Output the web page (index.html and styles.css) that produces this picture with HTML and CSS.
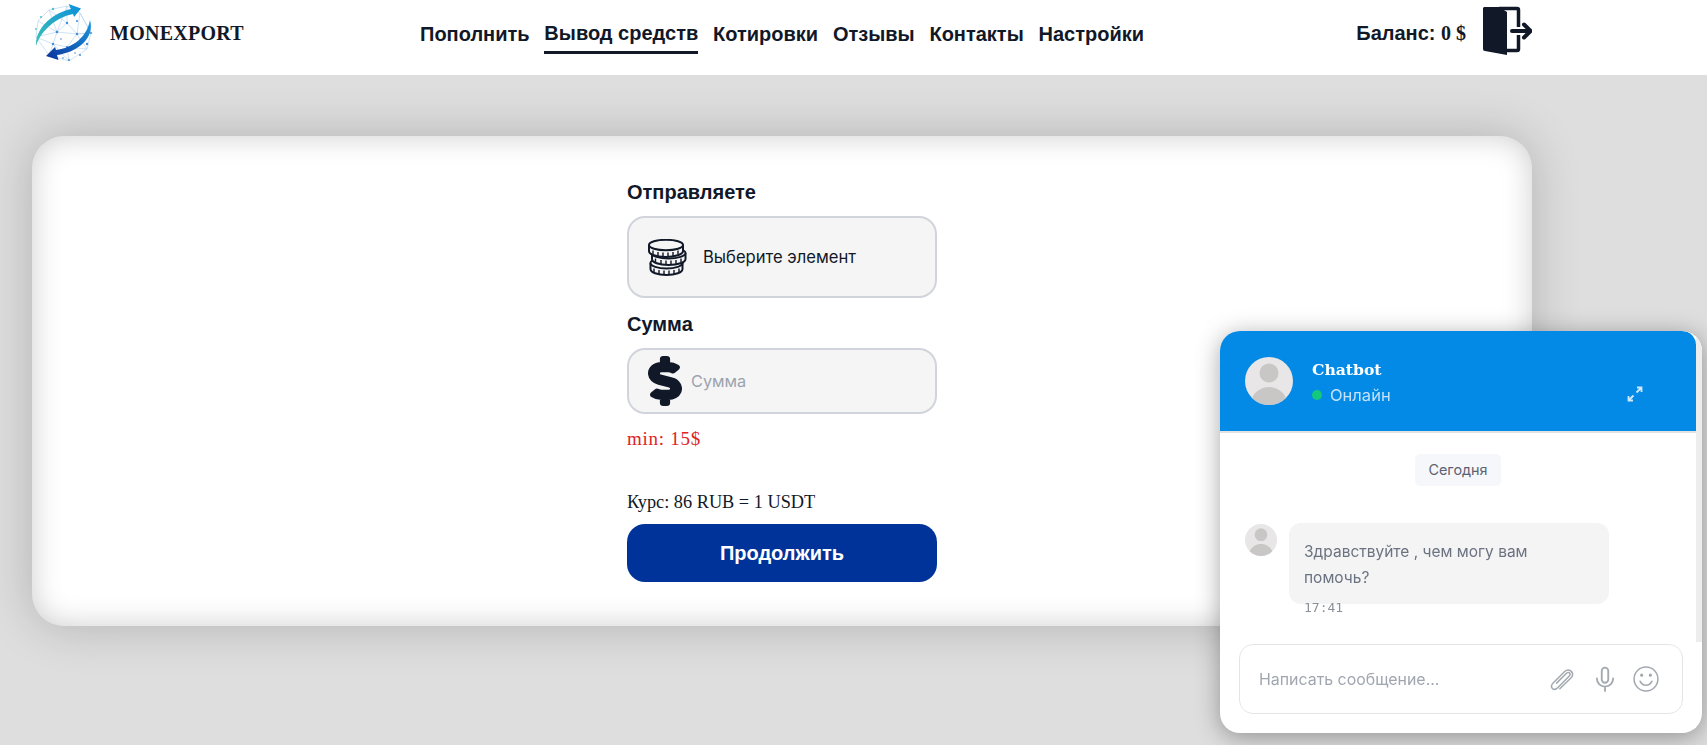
FILE: index.html
```html
<!DOCTYPE html>
<html lang="en">
<head>
  <meta charset="UTF-8" />
  <title>Monexport</title>
  <link rel="stylesheet" href="styles.css">
</head>
<body>
  <header class="topbar">
    <a class="brand">
      <svg class="brand-logo" viewBox="0 0 61 59">
        <defs>
          <linearGradient id="arrowTop" x1="0" y1="1" x2="1" y2="0">
            <stop offset="0" stop-color="#3cc0b4"/>
            <stop offset="1" stop-color="#0a8fdc"/>
          </linearGradient>
          <linearGradient id="arrowBottom" x1="1" y1="0" x2="0" y2="1">
            <stop offset="0" stop-color="#1a9ade"/>
            <stop offset="1" stop-color="#0b2f9c"/>
          </linearGradient>
        </defs>
        <g stroke="#aed0ec" stroke-width=".6" fill="none">
          <path d="M16 7 34 3 47 10 58 30 54 46 36 58 16 52 3 34 5 18Z"/>
          <path d="M16 7 24 29 20 41 36 58M34 3 24 29 44 31 54 46M47 10 44 31 34 44 20 41M3 34 24 29M34 44 36 58M44 31 58 30M34 3 34 20 44 31M16 7 34 20 24 29M5 18 24 29M3 34 20 41 16 52M34 44 54 46M47 10 58 30 44 31"/>
        </g>
        <g fill="#3e8ed6">
          <circle cx="24" cy="29" r="1.300"/><circle cx="44" cy="31" r="1.200"/><circle cx="34" cy="44" r="1.100"/>
          <circle cx="20" cy="41" r="1.200"/><circle cx="54" cy="41" r="1.200"/><circle cx="34" cy="20" r="1.200"/>
          <circle cx="47" cy="52" r="1"/><circle cx="36" cy="57" r="1"/><circle cx="58" cy="30" r="1"/>
          <circle cx="44" cy="18" r="1"/><circle cx="28" cy="36" r=".8"/><circle cx="50" cy="36" r=".8"/>
          <circle cx="42" cy="50" r=".8"/><circle cx="30" cy="55" r=".8"/><circle cx="16" cy="52" r=".8"/>
        </g>
        <g fill="#4cc0c8">
          <circle cx="20" cy="6" r="1.200"/><circle cx="8" cy="14" r="1"/><circle cx="3" cy="26" r=".9"/>
          <circle cx="30" cy="10" r=".9"/><circle cx="14" cy="24" r=".8"/>
        </g>
        <path d="M3 43C2 28 16 11 38 6L35.500 1 48 5.500 41 14 40 11C24 14 8 27 3 43Z" fill="url(#arrowTop)"/>
        <path d="M57 17C62 34 46 49 24 52L25.500 57 13 53 22 44 23 47C40 45 54 34 57 17Z" fill="url(#arrowBottom)"/>
      </svg>
      <span class="brand-name">MONEXPORT</span>
    </a>
    <nav class="nav">
      <a class="nav-link">Пополнить</a>
      <a class="nav-link active">Вывод средств</a>
      <a class="nav-link">Котировки</a>
      <a class="nav-link">Отзывы</a>
      <a class="nav-link">Контакты</a>
      <a class="nav-link">Настройки</a>
    </nav>
    <div class="account">
      <span class="balance">Баланс: <b>0 $</b></span>
      <svg class="logout" viewBox="0 0 50 50">
        <path d="M2 1H17L25 6V49L3 45Q1 45 1 43V2Z" fill="#111827"/>
        <path d="M17 2.500H35Q36.500 2.500 36.500 4V21M36.500 29V43Q36.500 44.500 35 44.500H25" fill="none" stroke="#111827" stroke-width="3.500"/>
        <path d="M30 25H48M42 18.500 48.500 25 42 31.500" fill="none" stroke="#111827" stroke-width="4" stroke-linecap="round" stroke-linejoin="round"/>
      </svg>
    </div>
  </header>

  <main class="card">
    <form class="withdraw">
      <label class="field-label">Отправляете</label>
      <div class="select-box">
        <svg class="coins" viewBox="0 0 39 37" fill="#f5f5f5" stroke="#111827" stroke-width="2">
          <path d="M2.500 24v6c0 3.500 7 6 16 6s16-2.500 16-6v-6"/>
          <ellipse cx="18.500" cy="24" rx="16" ry="5.500"/>
          <path d="M6 29.500v4M11 31v4M16 31.500v4M21 31.500v4M26 31v4M31 29.500v4" stroke-width="1.400"/>
          <path d="M4 14v6c0 3.500 7 6 16.500 6S37.500 23.500 37.500 20v-6"/>
          <ellipse cx="20.500" cy="14" rx="17" ry="5.500"/>
          <path d="M7.500 19.500v4M13 21v4M18 21.500v4M23 21.500v4M28 21v4M33 19.500v4" stroke-width="1.400"/>
          <path d="M1 6v6c0 3.500 7 6 16.500 6S35 15.500 35 12V6"/>
          <ellipse cx="18" cy="6" rx="17" ry="5.200"/>
          <path d="M5 11.500v4M10 13v4M15 13.500v4M20 13.500v4M25 13v4M30 11.500v4" stroke-width="1.400"/>
        </svg>
        <span>Выберите элемент</span>
      </div>
      <label class="field-label second">Сумма</label>
      <div class="amount-box">
        <svg class="dollar" viewBox="-16 -16 320 544" preserveAspectRatio="none">
          <path fill="#111827" stroke="#111827" stroke-width="32" stroke-linejoin="round" d="M209.2 233.4l-108-31.6C88.7 198.2 80 186.5 80 173.5c0-16.3 13.2-29.5 29.5-29.5h66.3c12.2 0 24.2 3.7 34.2 10.5 6.1 4.1 14.3 3.1 19.5-2l34.8-34c7.1-6.9 6.1-18.4-1.8-24.5C238 74.8 207.4 64.1 176 64V16c0-8.8-7.2-16-16-16h-32c-8.8 0-16 7.2-16 16v48h-2.5C45.8 64-5.4 118.7.5 183.6c4.2 46.1 39.4 83.6 83.8 96.6l102.5 30c12.5 3.7 21.2 15.3 21.2 28.3 0 16.3-13.2 29.5-29.5 29.5h-66.3C100 368 88 364.3 78 357.5c-6.1-4.1-14.3-3.1-19.5 2l-34.8 34c-7.1 6.9-6.1 18.4 1.8 24.5 24.5 19.2 55.1 29.9 86.5 30v48c0 8.8 7.2 16 16 16h32c8.8 0 16-7.2 16-16v-48.2c46.6-.9 90.3-28.6 105.7-72.7 21.5-61.6-14.6-124.8-72.5-141.7z"/>
        </svg>
        <input class="amount-input" type="text" placeholder="Сумма" />
      </div>
      <p class="min-note">min: 15$</p>
      <p class="rate">Курс: 86 RUB = 1 USDT</p>
      <button class="submit" type="button">Продолжить</button>
    </form>
  </main>

  <aside class="chat">
    <div class="chat-head">
      <svg class="chat-avatar" viewBox="0 0 48 48">
        <circle cx="24" cy="24" r="24" fill="#e8e6e6"/>
        <circle cx="24" cy="16" r="9.500" fill="#c9c6c6"/>
        <path d="M7 41C10 34 17 30 24 30S38 34 41 41A24 24 0 0 1 7 41Z" fill="#c9c6c6"/>
      </svg>
      <div class="chat-info">
        <div class="chat-name">Chatbot</div>
        <div class="chat-status"><i class="dot"></i>Онлайн</div>
      </div>
      <svg class="chat-expand" viewBox="0 0 16 16" fill="none" stroke="#cfe8fa" stroke-width="1.800">
        <path d="M9.500 6.500 14.500 1.500M10 1.500H14.500V6M6.500 9.500 1.500 14.500M1.500 10V14.500H6"/>
      </svg>
    </div>
    <div class="chat-body">
      <div class="day-wrap"><span class="day">Сегодня</span></div>
      <div class="msg">
        <svg class="msg-avatar" viewBox="0 0 48 48">
          <circle cx="24" cy="24" r="24" fill="#e8e6e6"/>
          <circle cx="24" cy="16" r="9.500" fill="#c9c6c6"/>
          <path d="M7 41C10 34 17 30 24 30S38 34 41 41A24 24 0 0 1 7 41Z" fill="#c9c6c6"/>
        </svg>
        <div class="msg-main">
          <div class="bubble">Здравствуйте , чем могу вам помочь?</div>
          <div class="msg-time">17:41</div>
        </div>
      </div>
    </div>
    <div class="chat-input">
      <span class="chat-placeholder">Написать сообщение...</span>
      <svg class="tool clip" viewBox="0 0 24 24" fill="none" stroke="#a3a9b1" stroke-width="1.400" stroke-linecap="round">
        <path d="M21 5.500c-1.800-2.500-4.500-2.300-6.500-.4L4 15.500c-2 2-2.300 3.800-.9 5.200 1.400 1.400 3.300 1 5.200-.9L18.500 9.500c1.100-1.200 1.300-2.300.5-3.100-.8-.8-2-.6-3.100.5L7 15.800"/>
        <path d="M21 5.500c1.500 2 .8 4-1 5.800L10 21"/>
      </svg>
      <svg class="tool mic" viewBox="0 0 24 24" fill="none" stroke="#a3a9b1" stroke-width="1.700" stroke-linecap="round">
        <rect x="9" y="1.500" width="6" height="14" rx="3"/>
        <path d="M4.500 11.500c0 4.500 3.500 7.500 7.500 7.500s7.500-3 7.500-7.500M12 19v4"/>
      </svg>
      <svg class="tool smile" viewBox="0 0 24 24" fill="none" stroke="#a3a9b1" stroke-width="1.400" stroke-linecap="round">
        <circle cx="12" cy="12" r="11"/>
        <path d="M6.500 14c1.200 2.500 3 3.800 5.500 3.800s4.300-1.300 5.500-3.800"/>
        <circle cx="8" cy="8.500" r=".8" fill="#a3a9b1"/>
        <circle cx="16" cy="8.500" r=".8" fill="#a3a9b1"/>
      </svg>
    </div>
    <div class="scrollbar"></div>
  </aside>
</body>
</html>
```

FILE: styles.css
```css
* {
  box-sizing: border-box;
}

html,
body {
  height: 100%;
}

body {
  margin: 0;
  background-color: #dedede;
  color: #111827;
  font-family: "Liberation Sans", Arial, sans-serif;
  overflow: hidden;
}

/* top bar */
.topbar {
  display: flex;
  align-items: flex-start;
  height: 75px;
  padding: 0 175px 0 33px;
  background-color: #fff;
}

.brand {
  display: flex;
  align-items: center;
  width: 387px;
  padding-top: 3px;
}

.brand-logo {
  width: 61px;
  height: 59px;
}

.brand-name {
  margin-top: 2px;
  margin-left: 16px;
  font-family: "Liberation Serif", serif;
  font-size: 20px;
  font-weight: bold;
  letter-spacing: 0.25px;
}

.nav {
  display: flex;
  gap: 14.8px;
  padding-top: 21px;
}

.nav-link {
  margin-top: 1px;
  font-size: 20px;
  font-weight: bold;
  line-height: 24px;
}

.nav-link.active {
  margin-top: 0;
  padding-bottom: 6px;
  border-bottom: 3px solid #111827;
}

.account {
  display: flex;
  align-items: center;
  margin-left: auto;
  padding-top: 6px;
}

.balance {
  margin-top: 4px;
  font-size: 20px;
  font-weight: bold;
}

.balance b {
  font-family: "Liberation Serif", serif;
}

.logout {
  width: 50px;
  height: 50px;
  margin-left: 16px;
}

/* main card */
.card {
  width: 1500px;
  margin: 61px 0 0 32px;
  padding: 42px 0 44px;
  background-color: #fff;
  border-radius: 32px;
  box-shadow: 0 0 50px rgba(0, 0, 0, 0.2), inset 0 0 30px rgba(0, 0, 0, 0.2);
}

.withdraw {
  display: flex;
  flex-direction: column;
  width: 310px;
  margin: 0 auto;
}

.field-label {
  margin-bottom: 10px;
  font-size: 20px;
  font-weight: bold;
  line-height: 28px;
}

.field-label.second {
  margin-top: 12px;
}

.select-box,
.amount-box {
  display: flex;
  align-items: center;
  background-color: #f5f5f5;
  border: 2px solid #d1d5db;
  border-radius: 18px;
  font-family: Inter, sans-serif;
}

.select-box {
  height: 82px;
  padding-left: 19px;
  font-size: 16.6px;
}

.amount-box {
  height: 66px;
  padding-left: 19px;
}

.coins {
  flex-shrink: 0;
  width: 39px;
  height: 37px;
  margin-right: 16px;
}

.dollar {
  flex-shrink: 0;
  width: 34px;
  height: 50px;
}

.amount-input {
  width: 200px;
  margin-left: 9px;
  padding: 0;
  background: transparent;
  border: none;
  font-family: inherit;
  font-size: 16.3px;
}

.amount-input::placeholder {
  color: #9ca3af;
}

.min-note,
.rate {
  margin: 0;
  font-family: "Liberation Serif", serif;
  line-height: 28px;
}

.min-note {
  margin-top: 11px;
  font-size: 19px;
  letter-spacing: 0.75px;
  color: #e02424;
}

.rate {
  margin-top: 35px;
  margin-bottom: 8px;
  font-size: 18.3px;
}

.submit {
  height: 58px;
  background-color: #003399;
  color: #fff;
  border: none;
  border-radius: 18px;
  font-family: inherit;
  font-size: 20px;
  font-weight: bold;
}

/* chat widget */
.chat {
  position: fixed;
  right: 5px;
  bottom: 12px;
  display: flex;
  flex-direction: column;
  width: 482px;
  height: 402px;
  background-color: #fff;
  border-radius: 20px;
  box-shadow: 0 4px 24px rgba(0, 0, 0, 0.35);
  font-family: Inter, sans-serif;
  overflow: hidden;
}

.chat-head {
  display: flex;
  align-items: center;
  height: 102px;
  margin-right: 6px;
  padding: 27px 53px 27px 25px;
  background-color: #038ae6;
  border-bottom: 2px solid #e2e2e2;
  border-top-right-radius: 14px;
  background-clip: padding-box;
}

.chat-avatar {
  flex-shrink: 0;
  width: 48px;
  height: 48px;
}

.chat-info {
  margin-top: 2px;
  margin-left: 19px;
}

.chat-name {
  font-family: "DejaVu Serif", serif;
  font-size: 15.6px;
  font-weight: bold;
  color: #fff;
  line-height: 26px;
}

.chat-status {
  display: flex;
  align-items: center;
  font-size: 16.5px;
  line-height: 24px;
  color: #c4e2f8;
}

.dot {
  width: 10px;
  height: 10px;
  margin-right: 8px;
  background-color: #14c87c;
  border-radius: 50%;
}

.chat-expand {
  flex-shrink: 0;
  width: 16px;
  height: 16px;
  margin-top: 25px;
  margin-left: auto;
}

.chat-body {
  flex: 1;
  padding: 21px 0 0 25px;
}

.day-wrap {
  display: flex;
  justify-content: center;
  padding-right: 31px;
}

.day {
  padding: 0 13px;
  background-color: #f6f7fb;
  border-radius: 5px;
  font-size: 14.4px;
  line-height: 32px;
  color: #5b6270;
}

.msg {
  display: flex;
  align-items: flex-start;
  margin-top: 37px;
}

.msg-avatar {
  flex-shrink: 0;
  width: 32px;
  height: 32px;
  margin-top: 1px;
  margin-right: 12px;
}

.bubble {
  width: 320px;
  height: 81px;
  padding: 16px 30px 16px 15px;
  background-color: #f4f4f4;
  border-radius: 12px;
  font-size: 15.5px;
  line-height: 26px;
  color: #6b7280;
}

.msg-time {
  margin-top: -4px;
  padding-left: 15px;
  font-family: "DejaVu Sans Mono", monospace;
  font-size: 13px;
  line-height: 16px;
  color: #8b9199;
}

.chat-input {
  display: flex;
  align-items: center;
  height: 70px;
  margin: 0 19px 19px;
  padding: 0 23px 0 19px;
  border: 1px solid #e2e5e8;
  border-radius: 14px;
}

.chat-placeholder {
  flex: 1;
  font-size: 15.9px;
  color: #a0a6b0;
}

.tool {
  flex-shrink: 0;
  width: 26px;
  height: 26px;
}

.clip {
  margin-right: 17px;
}

.mic {
  margin-right: 15px;
}

.scrollbar {
  position: absolute;
  top: 0;
  right: 0;
  width: 6px;
  height: 311px;
  background-color: #ededed;
}
```
